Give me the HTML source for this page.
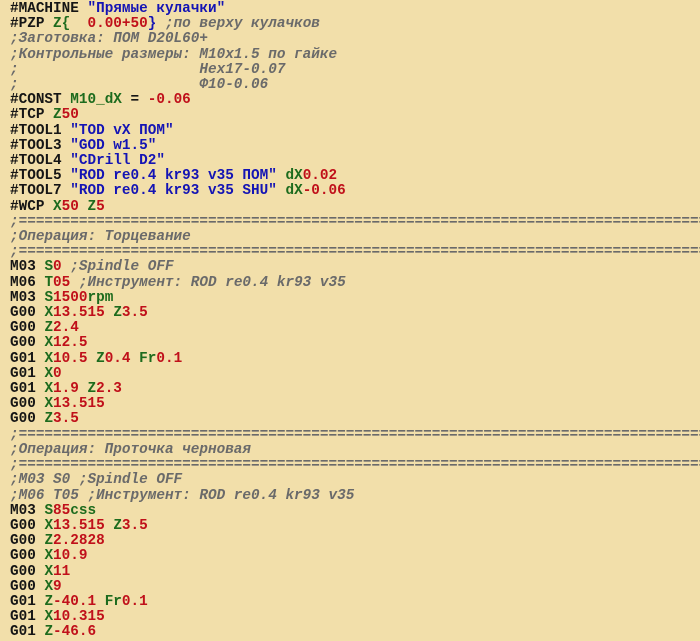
<!DOCTYPE html>
<html><head><meta charset="utf-8"><style>
html,body{margin:0;padding:0;background:#f2dfaa;width:700px;height:638px;overflow:hidden}
pre{margin:0;padding:0 0 0 10px;position:absolute;top:2px;left:0;font-family:"Liberation Mono","DejaVu Sans Mono",monospace;font-weight:bold;font-size:14.35px;line-height:15.2px;color:#151515;white-space:pre}
.g{color:#1d6b1d}.r{color:#c0101a}.b{color:#1414b4}.c{color:#6a6a6a;font-style:italic;font-weight:bold}
</style></head><body><pre>#MACHINE <span class="b">"Прямые кулачки"</span>
#PZP <span class="g">Z{</span>  <span class="r">0.00+50</span><span class="b">}</span> <span class="c">;по верху кулачков</span>
<span class="c">;Заготовка: ПОМ D20L60+</span>
<span class="c">;Контрольные размеры: M10x1.5 по гайке</span>
<span class="c">;                     Hex17-0.07</span>
<span class="c">;                     Ф10-0.06</span>
#CONST <span class="g">M10_dX</span> = <span class="r">-0.06</span>
#TCP <span class="g">Z</span><span class="r">50</span>
#TOOL1 <span class="b">"TOD vX ПОМ"</span>
#TOOL3 <span class="b">"GOD w1.5"</span>
#TOOL4 <span class="b">"CDrill D2"</span>
#TOOL5 <span class="b">"ROD re0.4 kr93 v35 ПОМ"</span> <span class="g">dX</span><span class="r">0.02</span>
#TOOL7 <span class="b">"ROD re0.4 kr93 v35 SHU"</span> <span class="g">dX</span><span class="r">-0.06</span>
#WCP <span class="g">X</span><span class="r">50</span> <span class="g">Z</span><span class="r">5</span>
<span class="c">;================================================================================</span>
<span class="c">;Операция: Торцевание</span>
<span class="c">;================================================================================</span>
M03 <span class="g">S</span><span class="r">0</span> <span class="c">;Spindle OFF</span>
M06 <span class="g">T</span><span class="r">05</span> <span class="c">;Инструмент: ROD re0.4 kr93 v35</span>
M03 <span class="g">S</span><span class="r">1500</span><span class="g">rpm</span>
G00 <span class="g">X</span><span class="r">13.515</span> <span class="g">Z</span><span class="r">3.5</span>
G00 <span class="g">Z</span><span class="r">2.4</span>
G00 <span class="g">X</span><span class="r">12.5</span>
G01 <span class="g">X</span><span class="r">10.5</span> <span class="g">Z</span><span class="r">0.4</span> <span class="g">Fr</span><span class="r">0.1</span>
G01 <span class="g">X</span><span class="r">0</span>
G01 <span class="g">X</span><span class="r">1.9</span> <span class="g">Z</span><span class="r">2.3</span>
G00 <span class="g">X</span><span class="r">13.515</span>
G00 <span class="g">Z</span><span class="r">3.5</span>
<span class="c">;================================================================================</span>
<span class="c">;Операция: Проточка черновая</span>
<span class="c">;================================================================================</span>
<span class="c">;M03 S0 ;Spindle OFF</span>
<span class="c">;M06 T05 ;Инструмент: ROD re0.4 kr93 v35</span>
M03 <span class="g">S</span><span class="r">85</span><span class="g">css</span>
G00 <span class="g">X</span><span class="r">13.515</span> <span class="g">Z</span><span class="r">3.5</span>
G00 <span class="g">Z</span><span class="r">2.2828</span>
G00 <span class="g">X</span><span class="r">10.9</span>
G00 <span class="g">X</span><span class="r">11</span>
G00 <span class="g">X</span><span class="r">9</span>
G01 <span class="g">Z</span><span class="r">-40.1</span> <span class="g">Fr</span><span class="r">0.1</span>
G01 <span class="g">X</span><span class="r">10.315</span>
G01 <span class="g">Z</span><span class="r">-46.6</span>
</pre></body></html>
